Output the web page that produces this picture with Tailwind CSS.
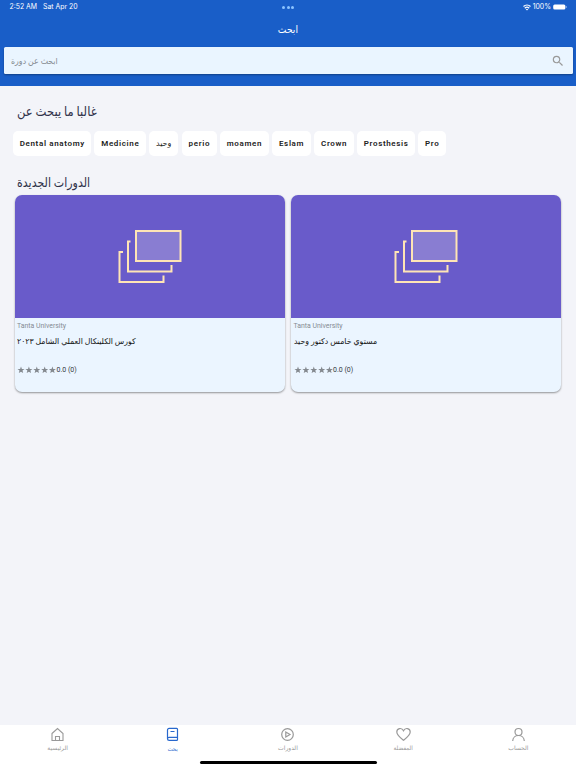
<!DOCTYPE html>
<html lang="ar">
<head>
<meta charset="utf-8">
<title>ابحث</title>
<script src="https://cdn.jsdelivr.net/npm/@tailwindcss/browser@4"></script>
</head>
<body class="bg-[#f3f4f9]">
<div class="relative flex h-[768px] w-[576px] flex-col overflow-hidden bg-[#f3f4f9] font-[Roboto,'DejaVu_Sans',sans-serif]">
  <header class="h-[85.5px] shrink-0 bg-[#195ec8] text-white">
    <div class="grid h-[14.4px] grid-cols-3 items-center pr-[9px] pl-[9.5px] font-[Inter,sans-serif] text-[6.9px] leading-[14px]">
      <div class="flex gap-[6px] whitespace-nowrap"><span>2:52 AM</span><span>Sat Apr 20</span></div>
      <div class="flex justify-center gap-[1.5px]"><i class="size-[3px] rounded-full bg-[#8cc4ff]"></i><i class="size-[3px] rounded-full bg-[#8cc4ff]"></i><i class="size-[3px] rounded-full bg-[#8cc4ff]"></i></div>
      <div class="flex items-center justify-end gap-[2px]">
        <svg class="h-[7px] w-[8px]" viewBox="0 0 16 13" fill="none" stroke="white" stroke-width="2.6"><path d="M1 4.6C5 .8 11 .8 15 4.6M3.6 7.8c2.6-2.3 6.2-2.3 8.8 0"/><path d="M8 12.5 5.500 9.800q2.500-1.900 5 0z" fill="white" stroke="none"/></svg>
        <span>100%</span>
        <svg class="h-[6px] w-[14px]" viewBox="0 0 14 6"><rect x=".2" y=".5" width="12.200" height="5" rx="1.500" fill="white"/><path d="M13 2v2q.8-.3.8-1T13 2" fill="#b5cdf0"/></svg>
      </div>
    </div>
    <h1 class="flex h-[33px] items-center justify-center pb-[2px] text-[10px] leading-[14px]"><span dir="rtl" class="inline-block scale-x-[.92]">ابحث</span></h1>
    <div class="mx-[3.5px] flex h-[27px] items-center justify-between rounded-[1.5px] bg-[#eaf5ff] pr-[7.5px] pl-[7px] shadow-[0_1px_2px_#0005]">
      <span dir="rtl" class="inline-block origin-left scale-x-[.92] text-[8.5px] leading-[14px] text-[#858b91]">ابحث عن دورة</span>
      <svg class="size-[14px]" viewBox="0 0 24 24" fill="#999"><path d="M15.5 14h-.79l-.28-.27A6.47 6.47 0 0 0 16 9.5 6.5 6.5 0 1 0 9.5 16c1.61 0 3.09-.59 4.23-1.57l.27.28v.79l5 4.99L20.49 19zm-6 0C7.01 14 5 11.99 5 9.5S7.01 5 9.5 5 14 7.01 14 9.5 11.99 14 9.5 14"/></svg>
    </div>
  </header>
  <main class="flex-1">
    <h2 class="mt-[16.5px] ml-[17px] h-[20px] text-[13px] leading-[20px] text-[#30324a]"><span dir="rtl" class="inline-block origin-left scale-x-[.89]">غالبا ما يبحث عن</span></h2>
    <div class="mt-[9px] ml-[13px] flex h-[25px] gap-[3.2px] text-[8px] font-semibold tracking-[.65px] whitespace-nowrap text-[#222] *:rounded-[5px]">
      <span class="flex w-[78px] items-center justify-center bg-white pl-[.6px]">Dental anatomy</span>
      <span class="flex w-[51.7px] items-center justify-center bg-white pl-[.6px]">Medicine</span>
      <span class="flex w-[29.3px] items-center justify-center bg-white font-normal tracking-normal"><span dir="rtl" class="inline-block">وحيد</span></span>
      <span class="flex w-[35px] items-center justify-center bg-white pl-[.6px]">perio</span>
      <span class="flex w-[48.9px] items-center justify-center bg-white pl-[.6px]">moamen</span>
      <span class="flex w-[38.9px] items-center justify-center bg-white pl-[.6px]">Eslam</span>
      <span class="flex w-[39.8px] items-center justify-center bg-white pl-[.6px]">Crown</span>
      <span class="flex w-[58px] items-center justify-center bg-white pl-[.6px]">Prosthesis</span>
      <span class="flex w-[27.8px] items-center justify-center bg-white pl-[.6px]">Pro</span>
    </div>
    <h2 class="mt-[17px] ml-[17px] h-[20px] text-[13px] leading-[20px] text-[#30324a]"><span dir="rtl" class="inline-block origin-left scale-x-[.85]">الدورات الجديدة</span></h2>
    <div class="mt-[1.5px] ml-[15px] flex gap-[6.5px]">
      <article class="h-[197.5px] w-[269.5px] overflow-hidden rounded-[7px] bg-[#ebf5ff] shadow-[0_1px_2px_#0006]">
        <div class="flex h-[123.5px] items-center justify-center bg-[#695bca]">
          <svg class="h-[54px] w-[64px]" viewBox="0 0 64 54" fill="none" stroke="#ffe5b5" stroke-width="2"><rect x="18" y="2" width="44.5" height="30" fill="#897dd2"/><path d="M12.500 12.500H10v30h43.500V36M5 23H1.500v30h44V46.500"/></svg>
        </div>
        <div class="pl-[2px]">
          <p class="pt-[2.5px] text-[6.9px] leading-[11px] text-[#858b93]">Tanta University</p>
          <p class="mt-[2.4px] h-[16px] text-[8px] leading-[16px] text-[#111]"><span dir="rtl" class="inline-block origin-left scale-x-[.965]">كورس الكلينكال العملي الشامل ٢٠٢٣</span></p>
          <div class="mt-[14px] flex h-[12px] items-center text-[7px] text-[#33383d]">
            <svg class="h-[8px] w-[39.500px]" viewBox="0 0 39.500 8" fill="#84898f"><defs><path id="star" d="m4 .5.9 2.400 2.600.1-2 1.600.7 2.500L4 5.700 1.800 7.100l.7-2.500-2-1.600 2.600-.1z"/></defs><use href="#star"/><use href="#star" x="7.900"/><use href="#star" x="15.800"/><use href="#star" x="23.700"/><use href="#star" x="31.400"/></svg>
            <span>0.0 (0)</span>
          </div>
        </div>
      </article>
      <article class="h-[197.5px] w-[269.5px] overflow-hidden rounded-[7px] bg-[#ebf5ff] shadow-[0_1px_2px_#0006]">
        <div class="flex h-[123.5px] items-center justify-center bg-[#695bca]">
          <svg class="h-[54px] w-[64px]" viewBox="0 0 64 54" fill="none" stroke="#ffe5b5" stroke-width="2"><rect x="18" y="2" width="44.5" height="30" fill="#897dd2"/><path d="M12.500 12.500H10v30h43.500V36M5 23H1.500v30h44V46.500"/></svg>
        </div>
        <div class="pl-[2.5px]">
          <p class="pt-[2.5px] text-[6.9px] leading-[11px] text-[#858b93]">Tanta University</p>
          <p class="mt-[2.4px] h-[16px] text-[8px] leading-[16px] text-[#111]"><span dir="rtl" class="inline-block origin-left scale-x-[.975]">مستوي خامس دكتور وحيد</span></p>
          <div class="mt-[14px] flex h-[12px] items-center text-[7px] text-[#33383d]">
            <svg class="h-[8px] w-[39.500px]" viewBox="0 0 39.500 8" fill="#84898f"><use href="#star"/><use href="#star" x="7.900"/><use href="#star" x="15.800"/><use href="#star" x="23.700"/><use href="#star" x="31.400"/></svg>
            <span>0.0 (0)</span>
          </div>
        </div>
      </article>
    </div>
  </main>
  <nav class="grid h-[43px] shrink-0 grid-cols-5 bg-white text-[6px] leading-[10px] text-[#999]">
    <a class="flex flex-col items-center pt-[2px]"><svg class="size-[15px]" viewBox="0 0 15 15" fill="none" stroke="currentColor" stroke-width="1.100"><path d="M2 6.500 7.500 1.500 13 6.500v7H2zM5.500 13.500V9.500h4v4"/></svg><span dir="rtl" class="mt-[1px]">الرئيسية</span></a>
    <a class="flex flex-col items-center pt-[2px] text-[#2868cd]"><svg class="size-[15px]" viewBox="0 0 15 15" fill="none" stroke="currentColor" stroke-width="1.200"><path d="M12.500 10.300V2.300q0-.9-.9-.9H4.200q-1.700 0-1.700 1.700v8.600q0 1.700 1.700 1.700h7.400q.9 0 .9-.9v-2.200H4q-1.500.2-1.500 1.300M5.500 4.500h4"/></svg><span dir="rtl" class="mt-[2px] inline-block scale-x-[.86]">بحث</span></a>
    <a class="flex flex-col items-center pt-[2px]"><svg class="size-[15px]" viewBox="0 0 15 15" fill="none" stroke="currentColor" stroke-width="1.200"><circle cx="7.500" cy="7.500" r="5.800"/><path d="M5.800 5v5l4.200-2.500z"/></svg><span dir="rtl" class="mt-[1px]">الدورات</span></a>
    <a class="flex flex-col items-center pt-[2px]"><svg class="size-[15px]" viewBox="0 0 15 15" fill="none" stroke="currentColor" stroke-width="1.200"><path d="M7.500 13.300C4.300 10.800.8 8.200.8 5.100c0-4 4.900-4.900 6.700-1.400 1.800-3.500 6.700-2.600 6.700 1.400 0 3.100-3.500 5.700-6.700 8.200z"/></svg><span dir="rtl" class="mt-[1px] inline-block scale-x-[.95]">المفضلة</span></a>
    <a class="flex flex-col items-center pt-[2px]"><svg class="size-[15px]" viewBox="0 0 15 15" fill="none" stroke="currentColor" stroke-width="1.200"><circle cx="7.500" cy="5" r="3.500"/><path d="M1.700 13.900c.3-7.200 11.300-7.200 11.600 0"/></svg><span dir="rtl" class="mt-[1px]">الحساب</span></a>
  </nav>
  <div class="absolute bottom-[4.500px] left-[199.500px] h-[3px] w-[177px] rounded-full bg-black"></div>
</div>
</body>
</html>
